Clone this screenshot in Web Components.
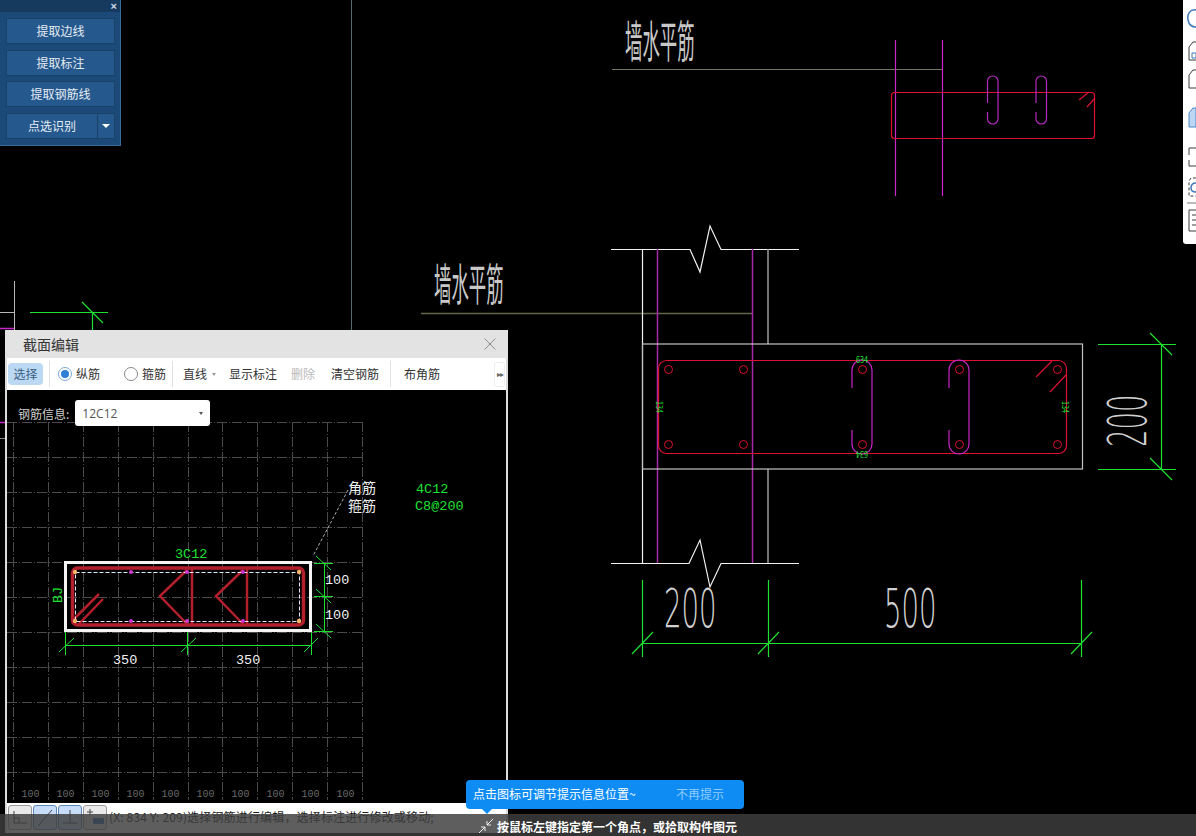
<!DOCTYPE html>
<html lang="zh">
<head>
<meta charset="utf-8">
<title>截面编辑</title>
<style>
  html, body { margin: 0; background: #000; overflow: hidden; }
  body { font-family: "Noto Sans CJK SC", "Liberation Sans", sans-serif; }
</style>
</head>
<body>
<cad-app>
  <cad-canvas></cad-canvas>
  <extract-panel>
    <panel-button>提取边线</panel-button>
    <panel-button>提取标注</panel-button>
    <panel-button>提取钢筋线</panel-button>
    <panel-button split>点选识别</panel-button>
  </extract-panel>
  <side-rail></side-rail>
  <section-dialog></section-dialog>
  <tip-bubble></tip-bubble>
  <status-bar>按鼠标左键指定第一个角点，或拾取构件图元</status-bar>
</cad-app>

<script>
const CJK = `"Noto Sans CJK SC", "Liberation Sans", sans-serif`;
const GREEN = '#1fe030';
const MAGENTA = '#c826c8';
const RED = '#dc1230';

class CadApp extends HTMLElement {
    constructor() {
        super();
        this.attachShadow({ mode: 'open' });
        this.shadowRoot.innerHTML = `
            <style>
                :host { display: block; position: relative; width: 1196px; height: 836px; background: #000; overflow: hidden; }
            </style>
            <slot></slot>
        `;
    }
}

// The drawing itself: a free canvas, everything at its drawing coordinates
class CadCanvas extends HTMLElement {
    constructor() {
        super();
        this.attachShadow({ mode: 'open' });
    }

    // rebar loop with a gap on its left side
    capsule(x, top, bottom, w, gapTop, gapBottom) {
        const r = w / 2;
        return `<path d="M${x} ${gapTop} V${top + r} A${r} ${r} 0 0 1 ${x + w} ${top + r} V${bottom - r} A${r} ${r} 0 0 1 ${x} ${bottom - r} V${gapBottom}"/>`;
    }

    connectedCallback() {
        let bars = '';
        [668, 743, 862, 959, 1057].forEach((x) => {
            bars += `<circle cx="${x}.5" cy="369.5" r="4"/><circle cx="${x}.5" cy="444.5" r="4"/>`;
        });
        this.shadowRoot.innerHTML = `
            <style>
                :host { display: block; position: absolute; inset: 0; }
                svg { display: block; }
                text { font-family: ${CJK}; }
                .title { fill: #c8c8c8; }
                .num { font-family: "DejaVu Sans", sans-serif; font-weight: 200; fill: #d0d0d0; }
            </style>
            <svg width="1196" height="836" viewBox="0 0 1196 836" fill="none">
                <path d="M351.5 0V330" stroke="#4f6a6a"/>
                <path d="M14.5 281V330M0 312.5H14" stroke="#b8b8b8"/>
                <path d="M0 328.5H14M0 422.5H6" stroke="${MAGENTA}" stroke-width="1.5"/>
                <path d="M0 438.5H6" stroke="#888"/>
                <path d="M30 312.5H108M92.5 312V330M82 302L103 323" stroke="${GREEN}" stroke-width="1.2"/>

                <!-- upper detail -->
                <text class="title" transform="translate(625 58) scale(.47 1.2)" font-size="37">墙水平筋</text>
                <path d="M612 69.5H942" stroke="#76765c"/>
                <path d="M895.5 40V196M942.5 40V196" stroke="${MAGENTA}" stroke-width="1.2"/>
                <rect x="891.5" y="92.5" width="203" height="46" rx="3" stroke="${RED}" stroke-width="1.2"/>
                <g stroke="#b52ac0" stroke-width="1.2">
                    ${this.capsule(987.5, 76, 124, 10.5, 103, 112)}
                    ${this.capsule(1036, 76, 124, 10.5, 103, 112)}
                </g>
                <path d="M1079 100L1089 92M1087 107L1095 98" stroke="${RED}" stroke-width="1.2"/>

                <!-- wall section -->
                <text class="title" transform="translate(434 301) scale(.47 1.2)" font-size="37">墙水平筋</text>
                <path d="M421 313.5H752" stroke="#66664e" stroke-width="1.5"/>
                <path d="M611 249.5H690L700 272L710 226L721 249.5H799M611 563.5H689L700 540L710 587L721 563.5H799M642.5 249V563" stroke="#f2f2f2" stroke-width="1.2"/>
                <path d="M768 249V344M768 469V563" stroke="#9a9a9a" stroke-width="1.5"/>
                <path d="M657.5 249V563M752.5 249V563" stroke="#a828a8" stroke-width="1.5"/>
                <rect x="642.5" y="344" width="440" height="125" stroke="#c4c4c4" stroke-width="1.2"/>
                <rect x="658.5" y="360.5" width="408" height="93" rx="8" stroke="${RED}" stroke-width="1.2"/>
                <g stroke="${RED}">${bars}</g>
                <path d="M1036 377L1052 361M1050 392L1066 375" stroke="${RED}" stroke-width="1.2"/>
                <g stroke="${MAGENTA}" stroke-width="1.2">
                    ${this.capsule(852, 360, 454, 20, 388, 430)}
                    ${this.capsule(949, 360, 454, 20, 388, 430)}
                </g>
                <g fill="${GREEN}" font-size="9">
                    <text transform="translate(862 363) scale(.8 1)" text-anchor="middle">634</text>
                    <text transform="translate(862 451) rotate(180) scale(.8 1)" text-anchor="middle">634</text>
                    <text transform="translate(656 407) rotate(90) scale(.8 1)" text-anchor="middle">134</text>
                    <text transform="translate(1062 407) rotate(90) scale(.8 1)" text-anchor="middle">134</text>
                </g>

                <!-- dimensions -->
                <path d="M1098 344.5H1176M1098 469.5H1176M1161.5 344V469M1150 333L1172 355M1150 458L1172 480" stroke="${GREEN}" stroke-width="1.2"/>
                <path d="M642 643.5H1081M642.5 580V657M768.5 580V657M1081.5 580V657M632 654L653 632M758 654L779 632M1071 654L1092 632" stroke="${GREEN}" stroke-width="1.2"/>
                <text class="num" transform="translate(664 627) scale(.52 1)" font-size="53">200</text>
                <text class="num" transform="translate(884 627) scale(.52 1)" font-size="53">500</text>
                <text class="num" transform="translate(1146 447) rotate(-90) scale(.52 1)" font-size="53">200</text>
            </svg>
        `;
    }
}

class ExtractPanel extends HTMLElement {
    constructor() {
        super();
        this.attachShadow({ mode: 'open' });
        this.shadowRoot.innerHTML = `
            <style>
                :host {
                    display: flex; flex-direction: column; position: absolute; left: 0; top: 0;
                    width: 121px; height: 146px; box-sizing: border-box;
                    background: #1c4a78; border-right: 1px solid #3a6a9a; border-bottom: 1px solid #3a6a9a;
                }
                .head { height: 12px; flex: none; display: flex; justify-content: flex-end; padding-right: 3px;
                    background: #163a5e; color: #cfdbe8; font: bold 11px/12px "Liberation Sans", sans-serif; }
                .list { display: flex; flex-direction: column; gap: 5.6px; padding: 6px 5px 0 6px; }
            </style>
            <div class="head">×</div>
            <div class="list"><slot></slot></div>
        `;
    }
}

class PanelButton extends HTMLElement {
    constructor() {
        super();
        this.attachShadow({ mode: 'open' });
        const caret = this.hasAttribute('split') ? '<span class="caret"></span>' : '';
        this.shadowRoot.innerHTML = `
            <style>
                :host { display: flex; height: 26px; box-sizing: border-box; background: #25588c; border: 1px solid #1a4266;
                    color: #e6edf5; font: 12px/24px ${CJK}; }
                .label { flex: 1; text-align: center; }
                .caret { width: 16px; flex: none; border-left: 1px solid #1a4266; position: relative; }
                .caret::after { content: ''; position: absolute; left: 4px; top: 10px;
                    border: 4px solid transparent; border-top: 4px solid #fff; border-bottom: 0; }
            </style>
            <span class="label"><slot></slot></span>${caret}
        `;
    }
}

class SideRail extends HTMLElement {
    constructor() {
        super();
        this.attachShadow({ mode: 'open' });
        this.shadowRoot.innerHTML = `
            <style>
                :host { display: block; position: absolute; right: 0; top: 0; width: 13px; height: 244px; background: #fff; border-radius: 0 0 0 3px; }
                svg { display: block; }
            </style>
            <svg width="13" height="244" viewBox="1183 0 13 244" fill="none" stroke="#3c3c3c">
                <path d="M1196 10C1190 9 1187 14 1188 20C1189 25 1192 27 1196 27" stroke="#3f79b8" stroke-width="1.5"/>
                <path d="M1196 42H1193L1189 47V60H1196" />
                <path d="M1192 53H1196V58H1192Z" stroke="#3f79b8"/>
                <path d="M1196 70H1193L1189 75V88H1196"/>
                <path d="M1196 108H1193L1189 113V127H1196V108Z" fill="#bcd6f4" stroke="#4a86c8"/>
                <path d="M1196 148H1189V155M1189 160V166H1196"/>
                <path d="M1196 178H1191L1189 181V196H1196" stroke-dasharray="3 2"/>
                <path d="M1196 183C1192 183 1191 186 1191 188C1191 191 1193 192 1196 192" stroke="#3f79b8" stroke-width="1.5"/>
                <path d="M1187 203H1196" stroke="#777"/>
                <path d="M1196 210H1189V231H1196M1192 215H1196M1192 220H1196M1192 225H1196"/>
            </svg>
        `;
    }
}

// Small toolbar text button
class ToolLabel extends HTMLElement {
    constructor() {
        super();
        this.attachShadow({ mode: 'open' });
        this.shadowRoot.innerHTML = `
            <style>
                :host { display: block; font: 12px/24px ${CJK}; color: #333; white-space: nowrap; }
                :host([active]) { background: #bcd9f3; border-radius: 4px; padding: 0 5.5px; line-height: 22px; color: #3a5f86; }
                :host([disabled]) { color: #b9b9b9; }
            </style>
            <slot></slot>
        `;
    }
}

class RadioOption extends HTMLElement {
    constructor() {
        super();
        this.attachShadow({ mode: 'open' });
        this.shadowRoot.innerHTML = `
            <style>
                :host { display: flex; align-items: center; gap: 4px; font: 12px/24px ${CJK}; color: #333; white-space: nowrap; }
                i { width: 14px; height: 14px; box-sizing: border-box; border: 1px solid #8a8a8a; border-radius: 50%; background: #fff; position: relative; }
                :host([checked]) i { border-color: #7aa7d6; }
                :host([checked]) i::after { content: ''; position: absolute; inset: 2px; border-radius: 50%; background: #2f7fd8; }
            </style>
            <i></i><slot></slot>
        `;
    }
}

class SnapButton extends HTMLElement {
    constructor() {
        super();
        this.attachShadow({ mode: 'open' });
        this.shadowRoot.innerHTML = `
            <style>
                :host { display: block; width: 24px; height: 25px; box-sizing: border-box; border: 1px solid #9a9a9a; border-radius: 3px; background: #e9e9e9; }
                :host([on]) { background: #c6dcf8; border-color: #5f86b8; }
                ::slotted(svg) { display: block; }
            </style>
            <slot></slot>
        `;
    }
}

class SectionDialog extends HTMLElement {
    constructor() {
        super();
        this.attachShadow({ mode: 'open' });
    }

    // dashed background grid, in page coordinates
    grid() {
        let out = '';
        for (let i = 0; i <= 10; i++) {
            const x = Math.round(13 + i * 34.9) + 0.5;
            out += `<path d="M${x} 422V800"/>`;
        }
        for (let i = 0; i <= 10; i++) {
            const y = 422.5 + i * 35;
            out += `<path d="M7 ${y}H362"/>`;
        }
        return out;
    }

    section() {
        const pink = [[131, 572], [187, 572], [243, 572], [131, 621], [187, 621], [243, 621]];
        const corner = [[75, 572], [299, 572], [75, 621], [299, 621]];
        return `
            <rect x="65.5" y="562.5" width="245" height="68" stroke="#f4f4f4" stroke-width="3"/>
            <rect x="72.5" y="568" width="231" height="57" rx="5" stroke="#b3202c" stroke-width="3.5"/>
            <path d="M73 620L99 594M78 625L103 599M192 568V625M187 570L160 596L187 624M247 568V625M243 570L216 596L243 624" stroke="#b3202c" stroke-width="2.5"/>
            <rect x="75.5" y="572.5" width="224" height="49" stroke="#e6e6ff" stroke-dasharray="4 2"/>
            ${pink.map(([x, y]) => `<circle cx="${x}" cy="${y}" r="2" fill="#d035d0"/>`).join('')}
            ${corner.map(([x, y]) => `<circle cx="${x}" cy="${y}" r="2.2" fill="#f2b36b"/>`).join('')}
            <path d="M348 490L313 556" stroke="#aaa" stroke-dasharray="3 2"/>
            <path d="M65 645.5H311M65.5 632V655M187.5 632V655M311.5 632V655M59 652L74 638M181 652L196 638M304 652L318 638" stroke="${GREEN}"/>
            <path d="M314 563.5H333M314 596.5H333M314 631.5H333M324.5 563V631M316 556L331 570M316 589L331 603M316 624L331 638" stroke="${GREEN}"/>
        `;
    }

    connectedCallback() {
        let rulers = '';
        for (let i = 0; i < 10; i++) {
            rulers += `<text class="ruler" x="${30.5 + i * 35}" y="797" text-anchor="middle">100</text>`;
        }
        this.shadowRoot.innerHTML = `
            <style>
                :host {
                    display: flex; flex-direction: column; position: absolute; left: 5px; top: 330px;
                    width: 503px; height: 503px; box-sizing: border-box; background: #000;
                    font-family: ${CJK};
                }
                .title { height: 28px; flex: none; display: flex; align-items: center; justify-content: space-between;
                    padding: 0 12px 0 18px; background: #e3e3e3; font-size: 14px; color: #333; }
                .title svg { display: block; }
                .frame { flex: 1; display: flex; flex-direction: column; min-height: 0; border: solid #dcdcdc; border-width: 0 2px; }
                .tools { height: 32px; flex: none; box-sizing: border-box; display: flex; align-items: center; background: #fff; padding: 0 1px; position: relative; }
                .sep { width: 1px; height: 26px; background: #e2e2e2; flex: none; }
                .drop { display: flex; align-items: center; gap: 5px; }
                .drop::after { content: ''; border: 2.5px solid transparent; border-top: 3px solid #999; border-bottom: 0; }
                .more { margin-left: auto; width: 11px; height: 25px; box-sizing: border-box; border: 1px solid #eee; border-radius: 3px;
                    font: 8px/23px "Liberation Sans", sans-serif; color: #666; text-align: center; letter-spacing: -1px; }
                .body { flex: 1; min-height: 0; position: relative; background: #000; overflow: hidden; }
                .body svg { display: block; }
                .body text { font-family: "Liberation Mono", monospace; font-size: 13.5px; }
                .body text.cn { font-family: ${CJK}; font-size: 14px; }
                .body text.ruler { font-size: 10px; }
                .info { position: absolute; left: 11px; top: 10px; display: flex; align-items: center; gap: 6px; font-size: 12px; color: #cfcfcf; }
                .select { width: 135px; height: 26px; box-sizing: border-box; background: #fff; border-radius: 3px; padding: 0 7px;
                    display: flex; align-items: center; justify-content: space-between; font: 12px "Open Sans", sans-serif; color: #555; }
                .select::after { content: ''; border: 2.5px solid transparent; border-top: 3px solid #555; border-bottom: 0; }
                .foot { height: 30px; flex: none; box-sizing: border-box; background: #fff; display: flex; gap: 1px; padding: 2px 0 0 1px; position: relative; }
                .coords { font: 12px/24px ${CJK}; color: #222; margin-left: 1px; letter-spacing: .16px; white-space: nowrap; }
            </style>
            <div class="title">
                <span>截面编辑</span>
                <svg width="12" height="12" viewBox="0 0 12 12" stroke="#8c8c8c" fill="none"><path d="M.5 .5L11.5 11.5M11.5 .5L.5 11.5"/></svg>
            </div>
            <div class="frame">
                <div class="tools">
                    <tool-label active style="margin-right:6px">选择</tool-label>
                    <span class="sep"></span>
                    <radio-option checked style="margin-left:8px">纵筋</radio-option>
                    <radio-option style="margin-left:24px">箍筋</radio-option>
                    <span class="sep" style="margin-left:6px"></span>
                    <tool-label style="margin-left:10px"><span class="drop">直线</span></tool-label>
                    <tool-label style="margin-left:13px">显示标注</tool-label>
                    <tool-label disabled style="margin-left:14px">删除</tool-label>
                    <tool-label style="margin-left:16px">清空钢筋</tool-label>
                    <span class="sep" style="margin-left:11px"></span>
                    <tool-label style="margin-left:13px">布角筋</tool-label>
                    <span class="more">▸▸</span>
                </div>
                <div class="body">
                    <svg width="499" height="413" viewBox="7 390 499 413" fill="none">
                        <g stroke="#4a4a4a" stroke-dasharray="10 2 1 2">${this.grid()}</g>
                        <g fill="#6a6a6a">${rulers}</g>
                        ${this.section()}
                        <g fill="${GREEN}">
                            <text x="175" y="558">3C12</text>
                            <text transform="translate(62 603) rotate(-90)">BJ</text>
                            <text x="416" y="493">4C12</text>
                            <text x="415" y="510">C8@200</text>
                        </g>
                        <g fill="#f0f0f0">
                            <text x="325" y="584">100</text>
                            <text x="325" y="619">100</text>
                            <text x="113" y="664">350</text>
                            <text x="236" y="664">350</text>
                            <text class="cn" x="348" y="493">角筋</text>
                            <text class="cn" x="348" y="511">箍筋</text>
                        </g>
                    </svg>
                    <div class="info">
                        <span>钢筋信息:</span>
                        <div class="select">12C12</div>
                    </div>
                </div>
                <div class="foot">
                    <snap-button><svg width="22" height="23" fill="none" stroke="#444"><path d="M5 5V17H18M5 12H10V17"/></svg></snap-button>
                    <snap-button on><svg width="22" height="23" fill="none" stroke="#444"><path d="M4 20L18 4"/></svg></snap-button>
                    <snap-button on><svg width="22" height="23" fill="none" stroke="#444"><path d="M11 4V17M4 17H18"/></svg></snap-button>
                    <snap-button><svg width="22" height="23" fill="none" stroke="#444"><path d="M6 3V9M3 6H9"/><rect x="9" y="12" width="11" height="6" fill="#2b6fb8" stroke="none"/></svg></snap-button>
                    <span class="coords">(X: 834 Y: 209)选择钢筋进行编辑，选择标注进行修改或移动;</span>
                </div>
            </div>
        `;
    }
}

class TipBubble extends HTMLElement {
    constructor() {
        super();
        this.attachShadow({ mode: 'open' });
        this.shadowRoot.innerHTML = `
            <style>
                :host {
                    display: flex; align-items: center; justify-content: space-between; position: absolute; left: 466px; top: 780px;
                    width: 278px; height: 29px; box-sizing: border-box; padding: 0 20px 2px 7px;
                    background: #0e8cf4; border-radius: 4px; color: #fff; font: 12px ${CJK};
                }
                :host::after { content: ''; position: absolute; left: 16px; top: 29px;
                    border: 5px solid transparent; border-top: 5px solid #0e8cf4; border-bottom: 0; }
                .off { color: #8fcbff; }
            </style>
            <span>点击图标可调节提示信息位置~</span>
            <span class="off">不再提示</span>
        `;
    }
}

class StatusBar extends HTMLElement {
    constructor() {
        super();
        this.attachShadow({ mode: 'open' });
        this.shadowRoot.innerHTML = `
            <style>
                :host {
                    display: flex; align-items: center; position: absolute; left: 0; right: 0; top: 814px; height: 22px;
                    padding-left: 478px; padding-top: 2px; box-sizing: border-box; gap: 3px;
                    background: rgba(61, 61, 61, .83); color: #fff; font: bold 12px ${CJK};
                }
                svg { display: block; flex: none; }
            </style>
            <svg width="16" height="16" viewBox="0 0 16 16" fill="none" stroke="#eee"><path d="M15 1L9 7M9 3V7H13M1 15L7 9M7 13V9H3"/></svg>
            <slot></slot>
        `;
    }
}

customElements.define('cad-app', CadApp);
customElements.define('cad-canvas', CadCanvas);
customElements.define('extract-panel', ExtractPanel);
customElements.define('panel-button', PanelButton);
customElements.define('side-rail', SideRail);
customElements.define('tool-label', ToolLabel);
customElements.define('radio-option', RadioOption);
customElements.define('snap-button', SnapButton);
customElements.define('section-dialog', SectionDialog);
customElements.define('tip-bubble', TipBubble);
customElements.define('status-bar', StatusBar);
</script>
</body>
</html>
